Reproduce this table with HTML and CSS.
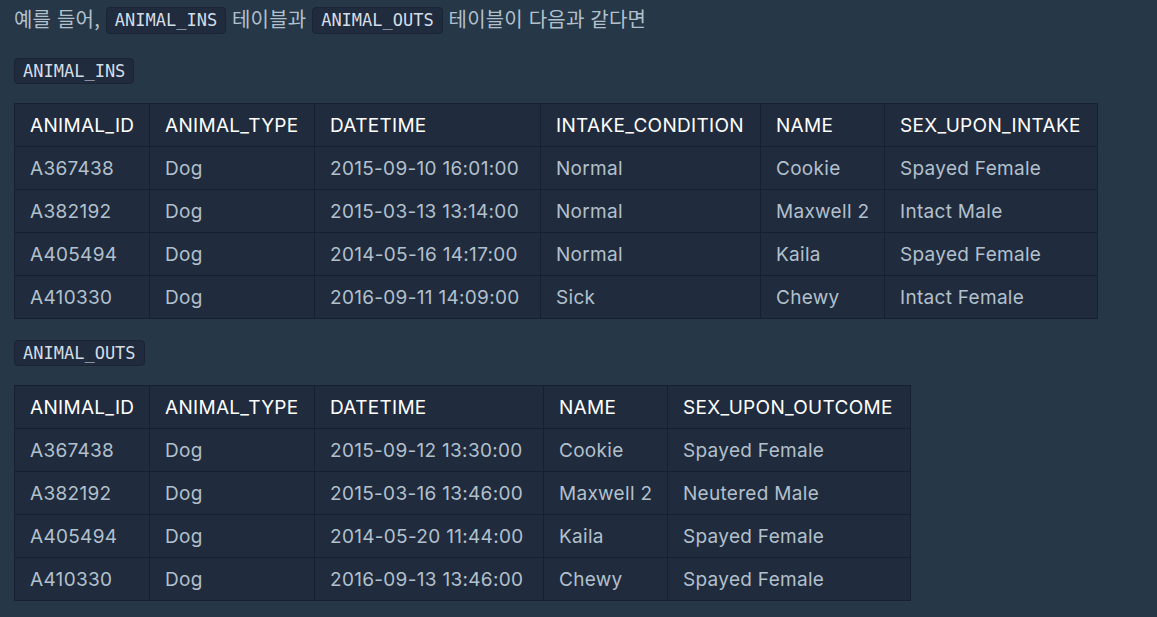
FILE: index.html
```html
<!DOCTYPE html>
<html lang="ko">
<head>
<meta charset="utf-8">
<link rel="stylesheet" href="styles.css">
</head>
<body>
<div class="page">
  <p class="intro">예를 들어, <code class="chip">ANIMAL_INS</code> 테이블과 <code class="chip">ANIMAL_OUTS</code> 테이블이 다음과 같다면</p>

  <div class="label label-first"><code class="chip">ANIMAL_INS</code></div>
  <table class="data data-ins">
    <colgroup>
      <col class="c-id"><col class="c-type"><col class="c-dt"><col class="c-cond"><col class="c-name"><col class="c-sex-in">
    </colgroup>
    <thead>
      <tr><th>ANIMAL_ID</th><th>ANIMAL_TYPE</th><th>DATETIME</th><th>INTAKE_CONDITION</th><th>NAME</th><th>SEX_UPON_INTAKE</th></tr>
    </thead>
    <tbody>
      <tr><td>A367438</td><td>Dog</td><td>2015-09-10 16:01:00</td><td>Normal</td><td>Cookie</td><td>Spayed Female</td></tr>
      <tr><td>A382192</td><td>Dog</td><td>2015-03-13 13:14:00</td><td>Normal</td><td>Maxwell 2</td><td>Intact Male</td></tr>
      <tr><td>A405494</td><td>Dog</td><td>2014-05-16 14:17:00</td><td>Normal</td><td>Kaila</td><td>Spayed Female</td></tr>
      <tr><td>A410330</td><td>Dog</td><td>2016-09-11 14:09:00</td><td>Sick</td><td>Chewy</td><td>Intact Female</td></tr>
    </tbody>
  </table>

  <div class="label label-second"><code class="chip">ANIMAL_OUTS</code></div>
  <table class="data data-outs">
    <colgroup>
      <col class="c-id"><col class="c-type"><col class="c-dt2"><col class="c-name"><col class="c-sex-out">
    </colgroup>
    <thead>
      <tr><th>ANIMAL_ID</th><th>ANIMAL_TYPE</th><th>DATETIME</th><th>NAME</th><th>SEX_UPON_OUTCOME</th></tr>
    </thead>
    <tbody>
      <tr><td>A367438</td><td>Dog</td><td>2015-09-12 13:30:00</td><td>Cookie</td><td>Spayed Female</td></tr>
      <tr><td>A382192</td><td>Dog</td><td>2015-03-16 13:46:00</td><td>Maxwell 2</td><td>Neutered Male</td></tr>
      <tr><td>A405494</td><td>Dog</td><td>2014-05-20 11:44:00</td><td>Kaila</td><td>Spayed Female</td></tr>
      <tr><td>A410330</td><td>Dog</td><td>2016-09-13 13:46:00</td><td>Chewy</td><td>Spayed Female</td></tr>
    </tbody>
  </table>
</div>
</body>
</html>
```
FILE: styles.css
```css
html, body {
  margin: 0;
  padding: 0;
  background: #263747;
}

.page {
  padding: 0 14px;
  font-family: Inter, "Noto Sans", "Noto Sans CJK KR", sans-serif;
  font-size: 19px;
  color: #b2c0cc;
}

.intro {
  margin: 0;
  line-height: 38px;
  font-family: "Noto Sans CJK KR", "Noto Sans", sans-serif;
  font-size: 20px;
  letter-spacing: 0.2px;
}

.chip {
  display: inline-block;
  box-sizing: border-box;
  height: 27px;
  line-height: 25px;
  padding: 0 8px;
  background: #202b3d;
  border: 1px solid #1a2433;
  border-radius: 4px;
  font-family: "DejaVu Sans Mono", monospace;
  font-size: 17px;
  letter-spacing: 0;
  color: #d4dde6;
  vertical-align: middle;
}

.intro .chip {
  position: relative;
  top: -1px;
}

.label {
  display: flex;
}

.label .chip {
  height: 26px;
  line-height: 24px;
}

.label-first {
  margin-top: 20px;
}

.label-second {
  margin-top: 21px;
}

.data {
  margin-top: 19px;
  border-collapse: collapse;
  table-layout: fixed;
  background: #202b3d;
  border: 1px solid #172030;
}

.data-ins {
  width: 1083px;
}

.data-outs {
  width: 896px;
}

.c-id { width: 135px; }
.c-type { width: 165px; }
.c-dt { width: 226px; }
.c-dt2 { width: 229px; }
.c-cond { width: 220px; }
.c-name { width: 124px; }
.c-sex-in { width: 213px; }
.c-sex-out { width: 243px; }

.data th,
.data td {
  height: 42px;
  padding: 0 15px;
  border: 1px solid #172030;
  text-align: left;
  white-space: nowrap;
  overflow: hidden;
  font-weight: 400;
  letter-spacing: 0.3px;
}

.data th {
  color: #ffffff;
}

.data td {
  color: #b2c0cc;
}
```
